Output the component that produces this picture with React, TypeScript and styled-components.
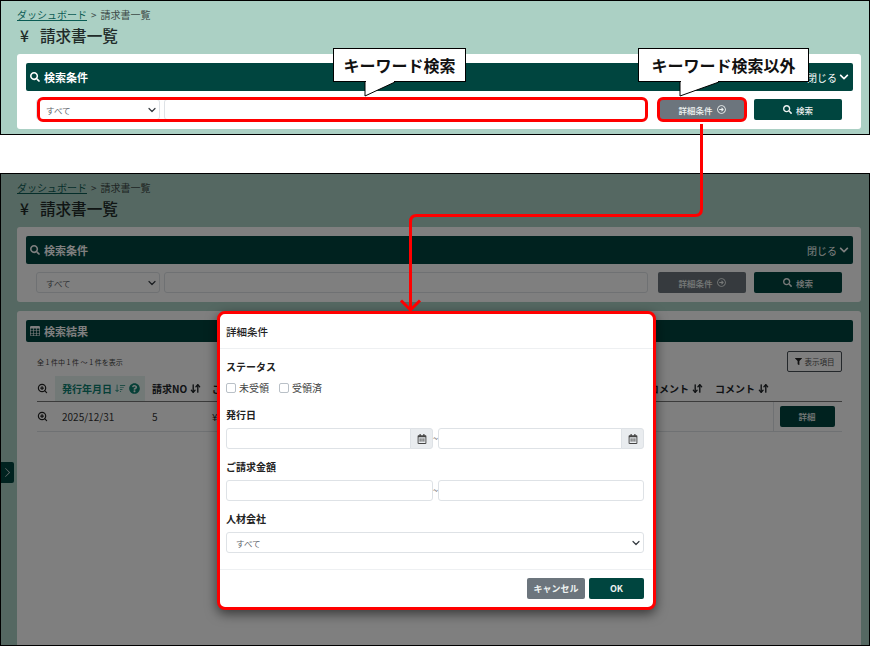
import styled, { createGlobalStyle } from "styled-components";
import {
  FaChevronDown,
  FaFilter,
  FaQuestionCircle,
  FaRegArrowAltCircleRight,
  FaRegCalendarAlt,
  FaSearch,
} from "react-icons/fa";
import { BsChevronRight, BsSortDown, BsTable } from "react-icons/bs";
import { ArrowDownUp, ZoomIn } from "lucide-react";

const GREEN = "#00453f";
const chevron =
  "url(\"data:image/svg+xml,%3Csvg xmlns='http://www.w3.org/2000/svg' viewBox='0 0 16 16'%3E%3Cpath fill='none' stroke='%23343a40' stroke-linecap='round' stroke-linejoin='round' stroke-width='2.4' d='m2 5 6 6 6-6'/%3E%3C/svg%3E\")";

const GlobalStyle = createGlobalStyle`
  html, body {
    margin: 0;
    padding: 0;
    background: #fff;
  }
  * {
    box-sizing: border-box;
  }
  body {
    font-family: "Noto Sans CJK JP", "Noto Sans", sans-serif;
    color: #212529;
  }
`;

const Page = styled.div`
  position: relative;
  width: 870px;
  height: 646px;
  overflow: hidden;
  display: flex;
  flex-direction: column;
  justify-content: space-between;
`;

const Shot = styled.section<{ $height: number }>`
  position: relative;
  height: ${(p) => p.$height}px;
  border: 1px solid #000;
  background: #abd0c4;
  padding: 0 8px 0 16px;
  overflow: hidden;
`;

const Head = styled.header`
  height: 53px;
  padding-top: 7px;
`;

const Crumbs = styled.div`
  display: flex;
  gap: 4px;
  font-size: 10px;
  line-height: 13px;
  color: #3d4a47;
`;

const CrumbLink = styled.a`
  color: #0b5c54;
  text-decoration: underline;
`;

const Title = styled.h1`
  display: flex;
  gap: 11px;
  margin: 3px 0 0 3px;
  font-size: 15.6px;
  line-height: 22px;
  font-weight: 500;
  color: #212b29;
`;

const Card = styled.div<{ $fill?: boolean }>`
  background: #fff;
  border-radius: 3px;
  padding: 9px 8px 8px 9px;
  margin-bottom: 9px;
  ${(p) => p.$fill && "height: 345px;"}
`;

const CardBar = styled.div<{ $height: number }>`
  display: flex;
  align-items: center;
  justify-content: space-between;
  height: ${(p) => p.$height}px;
  padding: 0 4px;
  background: ${GREEN};
  border-radius: 2px;
  color: #fff;
  font-size: 11px;
  font-weight: 700;
`;

const BarTitle = styled.span`
  display: flex;
  align-items: center;
  gap: 4px;
  svg {
    font-size: 10px;
  }
`;

const BarToggle = styled.span`
  display: flex;
  align-items: center;
  gap: 2px;
  font-size: 10px;
  font-weight: 400;
  svg {
    font-size: 10px;
  }
`;

const SearchRow = styled.div`
  display: flex;
  align-items: flex-start;
  gap: 8px;
  margin-top: 8px;
  padding: 0 11px 0 10px;
  height: 22px;
`;

const FieldGroup = styled.div<{ $marked?: boolean }>`
  position: relative;
  flex: 1;
  display: flex;
  gap: 4px;
  height: 21px;
  margin-right: 2px;
  ${(p) =>
    p.$marked &&
    `&::after {
      content: "";
      position: absolute;
      inset: -2px 0 -2px 1px;
      border: 3px solid #f00;
      border-radius: 6px;
    }`}
`;

const Select = styled.select<{ $width?: number }>`
  appearance: none;
  flex: ${(p) => (p.$width ? `0 0 ${p.$width}px` : "none")};
  width: ${(p) => (p.$width ? `${p.$width}px` : "100%")};
  height: 21px;
  padding: 0 0 0 9px;
  border: 1px solid #dee2e6;
  border-radius: 3px;
  background: #fff ${chevron} no-repeat right 3px center / 8px 8px;
  font-family: inherit;
  font-size: 8.5px;
  color: #5c636a;
`;

const TextInput = styled.input`
  flex: 1;
  min-width: 0;
  width: 100%;
  height: 21px;
  border: 1px solid #dee2e6;
  border-radius: 3px;
  background: #fff;
`;

const Button = styled.button<{ $tone: "green" | "gray"; $width: number; $marked?: boolean }>`
  position: relative;
  flex: 0 0 ${(p) => p.$width}px;
  display: flex;
  align-items: center;
  justify-content: center;
  gap: 4px;
  width: ${(p) => p.$width}px;
  height: 21px;
  padding: 0;
  border: 0;
  border-radius: 2px;
  background: ${(p) => (p.$tone === "green" ? GREEN : "#6c757d")};
  color: #eef2f1;
  font-family: inherit;
  font-size: 8.5px;
  font-weight: 500;
  svg {
    font-size: 9px;
  }
  ${(p) =>
    p.$marked &&
    `&::after {
      content: "";
      position: absolute;
      inset: -2px -1px -2px -1px;
      border: 3px solid #f00;
      border-radius: 6px;
    }`}
`;

const Callout = styled.div<{ $left: number; $width: number }>`
  position: absolute;
  left: ${(p) => p.$left}px;
  top: 47px;
  width: ${(p) => p.$width}px;
  height: 34px;
  display: flex;
  align-items: center;
  justify-content: center;
  background: #fff;
  border: 1px solid #000;
  font-size: 16px;
  font-weight: 700;
  color: #111;
`;

const CalloutTail = styled.svg<{ $left: number }>`
  position: absolute;
  left: ${(p) => p.$left}px;
  top: 31px;
  overflow: visible;
`;

const ResultBody = styled.div`
  padding: 9px 11px 0;
`;

const ResultMeta = styled.div`
  display: flex;
  align-items: center;
  justify-content: space-between;
  height: 21px;
  font-size: 7px;
  color: #444;
`;

const ColumnsButton = styled.button`
  display: flex;
  align-items: center;
  justify-content: center;
  gap: 3px;
  width: 55px;
  height: 21px;
  padding: 0;
  border: 1px solid #495057;
  border-radius: 2px;
  background: #fff;
  font-family: inherit;
  font-size: 7.5px;
  color: #555;
  svg {
    font-size: 7px;
    color: #222;
  }
`;

const Table = styled.table`
  width: 805px;
  margin-top: 4px;
  table-layout: fixed;
  border-collapse: collapse;
`;

const Th = styled.th<{ $width: number; $active?: boolean }>`
  width: ${(p) => p.$width}px;
  height: 25px;
  padding: 0 0 0 7px;
  border-bottom: 1px solid #777;
  background: ${(p) => (p.$active ? "#e4f2ee" : "transparent")};
  color: ${(p) => (p.$active ? "#0d8070" : "#212529")};
  font-size: 10px;
  font-weight: 700;
  text-align: left;
  white-space: nowrap;
`;

const IconTh = styled(Th)`
  padding: 0;
  color: #222;
  svg {
    display: block;
  }
`;

const SortIcon = styled.span`
  display: inline-flex;
  align-items: center;
  vertical-align: -1px;
  margin-left: 3px;
  font-size: 11px;
  gap: 3px;
`;

const Td = styled.td<{ $action?: boolean }>`
  height: 30px;
  padding: 0 0 0 ${(p) => (p.$action ? 6 : 7)}px;
  border-bottom: 1px solid #dee2e6;
  border-left: ${(p) => (p.$action ? "1px solid #dee2e6" : "0")};
  font-size: 10px;
  color: #333;
`;

const IconTd = styled(Td)`
  padding: 0;
  color: #222;
  svg {
    display: block;
  }
`;

const SideToggle = styled.div`
  position: absolute;
  left: 0;
  top: 288px;
  width: 13px;
  height: 21px;
  display: flex;
  align-items: center;
  justify-content: center;
  background: ${GREEN};
  color: #e6eeec;
  font-size: 11px;
  border-radius: 0 2px 2px 0;
`;

const Backdrop = styled.div`
  position: absolute;
  inset: 0;
  background: rgba(0, 0, 0, 0.5);
`;

const Modal = styled.div`
  position: absolute;
  left: 216px;
  top: 137px;
  width: 439px;
  height: 299px;
  display: flex;
  flex-direction: column;
  background: #fff;
  border: 3px solid #f00;
  border-radius: 8px;
  box-shadow: 0 4px 12px rgba(0, 0, 0, 0.55);
`;

const ModalTitle = styled.h2`
  display: flex;
  align-items: center;
  height: 35px;
  margin: 0;
  padding: 0 6px;
  border-bottom: 1px solid #eef0f2;
  font-size: 10.5px;
  font-weight: 500;
  color: #222;
`;

const ModalBody = styled.div`
  flex: 1;
  display: flex;
  flex-direction: column;
  gap: 12px;
  padding: 12px 9px 0 6px;
`;

const Field = styled.div`
  display: flex;
  flex-direction: column;
  gap: 7px;
`;

const FieldLabel = styled.div`
  font-size: 10px;
  line-height: 12px;
  font-weight: 700;
  color: #222;
`;

const Checks = styled.div`
  display: flex;
  gap: 10px;
  height: 16px;
  margin-bottom: 1px;
`;

const Check = styled.label`
  display: flex;
  align-items: center;
  gap: 3px;
  font-size: 10px;
  line-height: 16px;
  color: #444;
`;

const Box = styled.span`
  width: 10px;
  height: 10px;
  border: 1px solid #b9c0c7;
  border-radius: 2px;
  background: #fff;
`;

const RangeGrid = styled.div`
  display: grid;
  grid-template-columns: 207px 5px 206px;
  height: 21px;
  align-items: center;
`;

const Tilde = styled.span`
  font-size: 9px;
  line-height: 9px;
  text-align: center;
  color: #444;
`;

const DateField = styled.div`
  display: flex;
`;

const DateInput = styled(TextInput)`
  border-radius: 3px 0 0 3px;
`;

const DateAddon = styled.span`
  flex: 0 0 23px;
  display: flex;
  align-items: center;
  justify-content: center;
  height: 21px;
  margin-left: -1px;
  border: 1px solid #dee2e6;
  border-radius: 0 3px 3px 0;
  background: #e9ecef;
  color: #444;
  font-size: 10px;
`;

const ModalFooter = styled.div`
  display: flex;
  justify-content: flex-end;
  align-items: center;
  gap: 4px;
  height: 38px;
  padding: 0 9px 0 6px;
  border-top: 1px solid #eef0f2;
`;

const FooterButton = styled(Button)`
  font-size: 9px;
  font-weight: 700;
`;

const Connector = styled.svg`
  position: absolute;
  left: 0;
  top: 0;
  pointer-events: none;
`;

const SearchForm = ({ marked }: { marked?: boolean }) => (
  <Card>
    <CardBar $height={28}>
      <BarTitle>
        <FaSearch />
        検索条件
      </BarTitle>
      <BarToggle>
        閉じる
        <FaChevronDown />
      </BarToggle>
    </CardBar>
    <SearchRow>
      <FieldGroup $marked={marked}>
        <Select $width={124}>
          <option>すべて</option>
        </Select>
        <TextInput />
      </FieldGroup>
      <Button $tone="gray" $width={88} $marked={marked}>
        詳細条件
        <FaRegArrowAltCircleRight />
      </Button>
      <Button $tone="green" $width={88}>
        <FaSearch />
        検索
      </Button>
    </SearchRow>
  </Card>
);

const PageHead = () => (
  <Head>
    <Crumbs>
      <CrumbLink>ダッシュボード</CrumbLink>
      <span>&gt;</span>
      <span>請求書一覧</span>
    </Crumbs>
    <Title>
      <span>¥</span>
      請求書一覧
    </Title>
  </Head>
);

const Sort = () => (
  <SortIcon>
    <ArrowDownUp size={11} strokeWidth={3} />
  </SortIcon>
);

const App = () => {
  return (
    <Page>
      <GlobalStyle />
      <Shot $height={135}>
        <PageHead />
        <SearchForm marked />
        <Callout $left={332} $width={133}>
          キーワード検索
          <CalloutTail $left={30} width="32" height="16">
            <path d="M1 2V16L31 2" fill="#fff" stroke="#000" />
            <path d="M2 0H30V2H2Z" fill="#fff" />
          </CalloutTail>
        </Callout>
        <Callout $left={637} $width={171}>
          キーワード検索以外
          <CalloutTail $left={40} width="42" height="16">
            <path d="M1 2V16L40 2" fill="#fff" stroke="#000" />
            <path d="M2 0H39V2H2Z" fill="#fff" />
          </CalloutTail>
        </Callout>
      </Shot>

      <Shot $height={473}>
        <PageHead />
        <SearchForm />
        <Card $fill>
          <CardBar $height={22}>
            <BarTitle>
              <BsTable />
              検索結果
            </BarTitle>
          </CardBar>
          <ResultBody>
            <ResultMeta>
              <span>全 1 件中 1 件 〜 1 件を表示</span>
              <ColumnsButton>
                <FaFilter />
                表示項目
              </ColumnsButton>
            </ResultMeta>
            <Table>
              <thead>
                <tr>
                  <IconTh $width={18}>
                    <ZoomIn size={11} strokeWidth={2.6} />
                  </IconTh>
                  <Th $width={90} $active>
                    発行年月日
                    <SortIcon>
                      <BsSortDown />
                      <FaQuestionCircle />
                    </SortIcon>
                  </Th>
                  <Th $width={60}>
                    請求NO
                    <Sort />
                  </Th>
                  <Th $width={437}>
                    ご請求金額
                    <Sort />
                  </Th>
                  <Th $width={66}>
                    コメント
                    <Sort />
                  </Th>
                  <Th $width={65}>
                    コメント
                    <Sort />
                  </Th>
                  <Th $width={69} />
                </tr>
              </thead>
              <tbody>
                <tr>
                  <IconTd>
                    <ZoomIn size={11} strokeWidth={2.6} />
                  </IconTd>
                  <Td>2025/12/31</Td>
                  <Td>5</Td>
                  <Td>¥1,000</Td>
                  <Td />
                  <Td />
                  <Td $action>
                    <Button $tone="green" $width={55}>
                      詳細
                    </Button>
                  </Td>
                </tr>
              </tbody>
            </Table>
          </ResultBody>
        </Card>
        <SideToggle>
          <BsChevronRight />
        </SideToggle>
        <Backdrop />
        <Modal>
          <ModalTitle>詳細条件</ModalTitle>
          <ModalBody>
            <Field>
              <FieldLabel>ステータス</FieldLabel>
              <Checks>
                <Check>
                  <Box />
                  未受領
                </Check>
                <Check>
                  <Box />
                  受領済
                </Check>
              </Checks>
            </Field>
            <Field>
              <FieldLabel>発行日</FieldLabel>
              <RangeGrid>
                <DateField>
                  <DateInput />
                  <DateAddon>
                    <FaRegCalendarAlt />
                  </DateAddon>
                </DateField>
                <Tilde>~</Tilde>
                <DateField>
                  <DateInput />
                  <DateAddon>
                    <FaRegCalendarAlt />
                  </DateAddon>
                </DateField>
              </RangeGrid>
            </Field>
            <Field>
              <FieldLabel>ご請求金額</FieldLabel>
              <RangeGrid>
                <TextInput />
                <Tilde>~</Tilde>
                <TextInput />
              </RangeGrid>
            </Field>
            <Field>
              <FieldLabel>人材会社</FieldLabel>
              <Select>
                <option>すべて</option>
              </Select>
            </Field>
          </ModalBody>
          <ModalFooter>
            <FooterButton $tone="gray" $width={58}>
              キャンセル
            </FooterButton>
            <FooterButton $tone="green" $width={55}>
              OK
            </FooterButton>
          </ModalFooter>
        </Modal>
      </Shot>

      <Connector width="870" height="646">
        <path
          d="M701.5 124V209Q701.5 215.500 695 215.500H416.500Q410.500 215.500 410.500 222V310M401 300.500L410.500 310L420 300.500"
          fill="none"
          stroke="#f00"
          strokeWidth="3"
        />
      </Connector>
    </Page>
  );
};

export default App;
